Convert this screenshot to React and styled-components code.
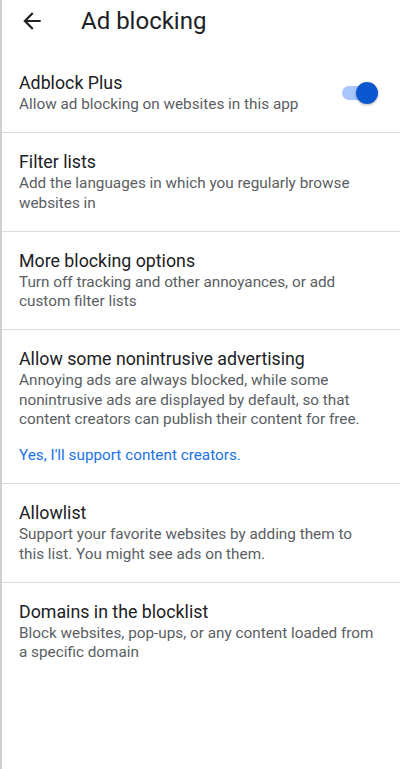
import React from "react"
import styled, { createGlobalStyle } from "styled-components"

const GlobalStyle = createGlobalStyle`
  html, body {
    margin: 0;
    padding: 0;
    background: #ffffff;
    font-family: Roboto, "Noto Sans", sans-serif;
  }
`

const Screen = styled.div`
  width: 400px;
  min-height: 769px;
  box-sizing: border-box;
  border-left: 2px solid #d0d0d0;
  background: #ffffff;
`

const Header = styled.header`
  display: flex;
  align-items: center;
  height: 42px;
  padding: 0 0 0 17px;
  gap: 36px;
`

const BackButton = styled.button`
  display: flex;
  align-items: center;
  justify-content: center;
  width: 26px;
  height: 26px;
  padding: 0;
  border: none;
  background: none;
  color: #202124;
`

const Title = styled.h1`
  margin: 0;
  font-size: 24px;
  font-weight: 400;
  color: #202124;
`

const List = styled.div`
  display: flex;
  flex-direction: column;
  padding-top: 12px;
`

const Row = styled.div`
  display: flex;
  align-items: center;
  gap: 16px;
  padding: 18px 22px 18px 17px;
  border-bottom: ${p => (p.$last ? "none" : "1px solid #dcdcdc")};
`

const Texts = styled.div`
  flex: 1;
  display: flex;
  flex-direction: column;
`

const ItemTitle = styled.div`
  font-size: 17.8px;
  line-height: 22px;
  color: #202124;
`

const ItemSub = styled.div`
  font-size: 15.3px;
  line-height: 19.3px;
  color: #5a5e63;
  padding-top: 1px;
`

const Link = styled.a`
  margin-top: 17px;
  font-size: 15.3px;
  line-height: 19px;
  color: #1a73e8;
  text-decoration: none;
`

const Track = styled.div`
  position: relative;
  width: 36px;
  height: 14px;
  border-radius: 7px;
  background: ${p => (p.$on ? "#a8c7fa" : "#bdc1c6")};
  flex-shrink: 0;
`

const Thumb = styled.div`
  position: absolute;
  top: -4px;
  left: ${p => (p.$on ? "14px" : "-2px")};
  width: 22px;
  height: 22px;
  border-radius: 50%;
  background: ${p => (p.$on ? "#0b57d0" : "#f1f3f4")};
  box-shadow: 0 1px 3px rgba(0, 0, 0, 0.3);
`

function Toggle({ on }) {
  return (
    <Track $on={on}>
      <Thumb $on={on} />
    </Track>
  )
}

const items = [
  {
    title: "Filter lists",
    sub: "Add the languages in which you regularly browse websites in",
  },
  {
    title: "More blocking options",
    sub: "Turn off tracking and other annoyances, or add custom filter lists",
  },
  {
    title: "Allow some nonintrusive advertising",
    sub: "Annoying ads are always blocked, while some nonintrusive ads are displayed by default, so that content creators can publish their content for free.",
    link: "Yes, I'll support content creators.",
  },
  {
    title: "Allowlist",
    sub: "Support your favorite websites by adding them to this list. You might see ads on them.",
  },
  {
    title: "Domains in the blocklist",
    sub: "Block websites, pop-ups, or any content loaded from a specific domain",
  },
]

export default function App() {
  return (
    <>
      <GlobalStyle />
      <Screen>
        <Header>
          <BackButton aria-label="Back">
            <svg width="26" height="26" viewBox="0 0 24 24" fill="currentColor">
              <path d="M20 11H7.83l5.59-5.59L12 4l-8 8 8 8 1.41-1.41L7.83 13H20v-2z" />
            </svg>
          </BackButton>
          <Title>Ad blocking</Title>
        </Header>
        <List>
          <Row>
            <Texts>
              <ItemTitle>Adblock Plus</ItemTitle>
              <ItemSub>Allow ad blocking on websites in this app</ItemSub>
            </Texts>
            <Toggle on />
          </Row>
          {items.map((it, i) => (
            <Row key={it.title} $last={i === items.length - 1}>
              <Texts>
                <ItemTitle>{it.title}</ItemTitle>
                <ItemSub>{it.sub}</ItemSub>
                {it.link && <Link href="#">{it.link}</Link>}
              </Texts>
            </Row>
          ))}
        </List>
      </Screen>
    </>
  )
}
